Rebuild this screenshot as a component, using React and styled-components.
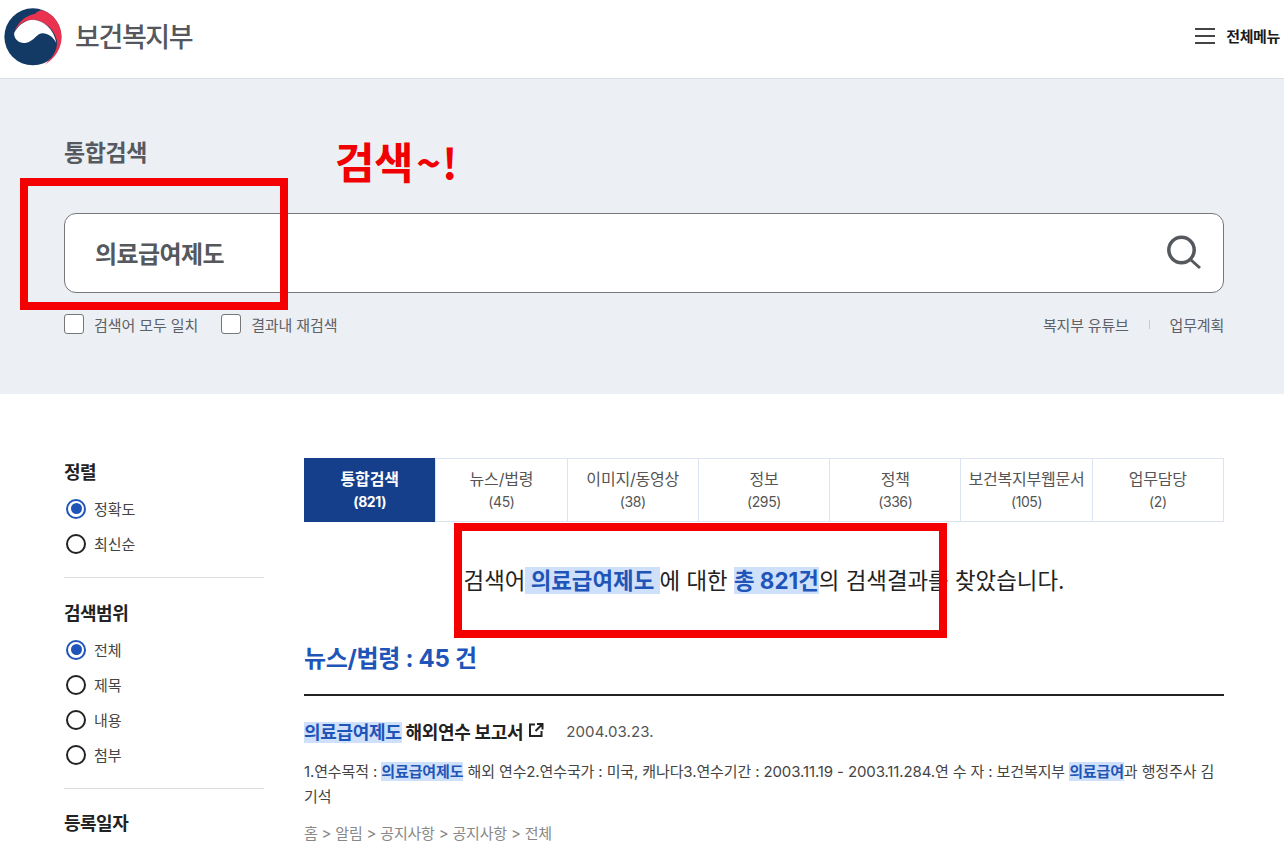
import React from "react";
import styled, { createGlobalStyle } from "styled-components";

const Global = createGlobalStyle`
  * { box-sizing: border-box; }
  html, body { margin: 0; padding: 0; height: 843px; overflow: hidden; background: #fff; }
  body { font-family: Inter, "Noto Sans CJK KR", sans-serif; color: #222; }
`;
const Page = styled.div`position: relative; width: 1284px; height: 843px; overflow: hidden;`;
const Header = styled.header`
  height: 79px; border-bottom: 1px solid #dcdee5; display: flex; align-items: center;
  justify-content: space-between; padding: 0 4px 0 0;
`;
const Brand = styled.div`display: flex; align-items: center; gap: 8px; margin-top: -7px;`;
const BrandName = styled.span`font-size: 27px; font-weight: 500; letter-spacing: -1.4px; color: #54575c;`;
const MenuButton = styled.div`
  display: flex; align-items: center; gap: 11px; font-size: 15px; font-weight: 700;
  letter-spacing: -0.35px; color: #1b1b1b; margin-top: -7px;
`;
const Burger = styled.span`
  width: 20px; height: 16px; display: block;
  border-top: 2px solid #444; border-bottom: 2px solid #444; position: relative;
  &::after { content: ""; position: absolute; left: 0; right: 0; top: 5px; height: 2px; background: #444; }
`;
const SearchBand = styled.section`height: 315px; background: #eceff4; padding: 58px 60px 0 64px;`;
const SearchTitle = styled.h2`margin: 0; font-size: 23px; line-height: 32px; font-weight: 700; letter-spacing: -0.4px; color: #565a60;`;
const SearchBox = styled.div`
  margin-top: 44px; height: 80px; background: #fff; border: 1px solid #75777b; border-radius: 12px;
  display: flex; align-items: center; justify-content: space-between; padding: 0 20px 2px 30px;
`;
const SearchValue = styled.span`font-size: 24px; font-weight: 700; letter-spacing: -0.6px; color: #55585c;`;
const Options = styled.div`margin-top: 21px; display: flex; justify-content: space-between; align-items: center; height: 20px;`;
const Checks = styled.div`display: flex; gap: 23px;`;
const CheckLabel = styled.label`display: flex; align-items: center; gap: 10px; font-size: 15px; letter-spacing: -0.1px; color: #5e6165;`;
const CheckBox = styled.span`width: 20px; height: 20px; border: 1px solid #75777b; border-radius: 3px; background: #fff;`;
const Links = styled.div`display: flex; align-items: center; font-size: 15px; letter-spacing: -0.2px; color: #5e6165;`;
const LinkSep = styled.i`width: 1px; height: 9px; background: #c9ccd2; margin: 0 20px;`;
const Body = styled.main`display: grid; grid-template-columns: 200px 920px; column-gap: 40px; padding: 64px 0 0 64px;`;
const Sidebar = styled.aside`display: flex; flex-direction: column;`;
const FilterGroup = styled.div`
  padding: ${p => (p.$last ? "0" : "1px 0 16px")}; margin-bottom: 21px;
  border-bottom: ${p => (p.$last ? "none" : "1px solid #dcdcdc")};
`;
const FilterTitle = styled.h3`margin: 0 0 4px; font-size: 18px; line-height: 28px; font-weight: 700; letter-spacing: -0.5px; color: #222;`;
const RadioRow = styled.div`height: 35px; display: flex; align-items: center; gap: 8px; font-size: 15px; letter-spacing: 0; color: #444;`;
const RadioDot = styled.span`
  width: 20px; height: 20px; margin-left: 2px; border-radius: 50%; background: #fff; position: relative;
  border: 2px solid ${p => (p.$on ? "#1f55b8" : "#222")};
  &::after {
    content: ""; display: ${p => (p.$on ? "block" : "none")}; position: absolute; inset: 2.5px;
    border-radius: 50%; background: #1f55b8;
  }
`;
const Content = styled.div`min-width: 0;`;
const Tabs = styled.nav`display: grid; grid-template-columns: repeat(7, 1fr); height: 64px; border-top: 1px solid #dbe5f1; border-bottom: 1px solid #dbe5f1; border-right: 1px solid #dbe5f1;`;
const Tab = styled.div`
  display: flex; flex-direction: column; align-items: center; justify-content: center; text-align: center;
  margin: ${p => (p.$active ? "-1px 0" : "0")};
  background: ${p => (p.$active ? "#153e8b" : "#fff")}; color: ${p => (p.$active ? "#fff" : "#555")};
  font-weight: ${p => (p.$active ? 700 : 400)}; border-left: ${p => (p.$active ? "0" : "1px solid #dbe5f1")};
  font-size: 16px; letter-spacing: -0.2px; line-height: 24px; white-space: nowrap;
`;
const TabCount = styled.span`font-size: 14px; line-height: 22px; letter-spacing: -0.4px;`;
const Summary = styled.p`margin: 43px 0 0; text-align: center; font-size: 22.4px; line-height: 32px; letter-spacing: 0; color: #222;`;
const Mark = styled.mark`background: #cfe0fb; color: #1f55b8; font-weight: 700; white-space: pre;`;
const SectionTitle = styled.h2`
  margin: 45px 0 0; padding-bottom: 18px; border-bottom: 2px solid #222; font-size: 24px; line-height: 34px;
  font-weight: 700; letter-spacing: -0.3px; color: #1f55b8;
`;
const ResultHead = styled.div`margin-top: 22px; display: flex; align-items: center; height: 26px;`;
const ResultTitle = styled.span`font-size: 18px; font-weight: 700; letter-spacing: -0.3px; color: #222;`;
const ResultDate = styled.span`margin-left: 22px; font-size: 15px; color: #555; letter-spacing: 0.1px;`;
const ExtLink = styled.svg`width: 16px; height: 16px; margin-left: 5px; margin-top: -3px; color: #222;`;
const ResultText = styled.p`margin: 15px 0 0; font-size: 15px; line-height: 25px; letter-spacing: -0.12px; color: #444; word-break: break-all;`;
const Crumbs = styled.div`margin-top: 14px; font-size: 15px; line-height: 22px; letter-spacing: -0.2px; color: #888;`;
const RedBox = styled.div`
  position: absolute; left: ${p => p.$x}px; top: ${p => p.$y}px; width: ${p => p.$w}px; height: ${p => p.$h}px;
  border: ${p => p.$b}px solid #f40000; pointer-events: none;
`;
const Scribble = styled.div`
  position: absolute; left: 335px; top: 131px; color: #f00000; font-size: 43px; line-height: 58px;
  font-weight: 700; letter-spacing: -0.5px; font-family: "Noto Sans CJK KR", sans-serif;
`;
const Tail = styled.span`font-size: 42px; margin-left: 3px; letter-spacing: 1px;`;
const LogoMark = styled.svg`display: block; margin-top: -2px;`;

const Logo = () => (
  <LogoMark width="67" height="67" viewBox="0 0 200 200">
    <circle cx="98" cy="107" r="85" fill="#123a64" />
    <path d="M42 92C55 60 80 42 105 38C112 30 122 26 128 28C160 38 184 70 184 108C183 145 160 175 133 190C155 170 172 150 170 120C165 85 130 58 100 56C75 56 55 70 42 92Z" fill="#e8324f" />
    <path d="M42 96C55 70 78 56 100 56C130 58 162 85 168 125C155 100 130 90 115 100C100 112 95 122 75 125C58 127 42 115 42 96Z" fill="#fff" />
  </LogoMark>
);

const SearchIcon = () => (
  <svg width="36" height="36" viewBox="0 0 36 36" fill="none" stroke="#55585c">
    <circle cx="14.5" cy="16" r="12.7" strokeWidth="3.5" />
    <path d="M24 26l9 8" strokeWidth="3" />
  </svg>
);

const tabs = [
  ["통합검색", "(821)"], ["뉴스/법령", "(45)"], ["이미지/동영상", "(38)"], ["정보", "(295)"],
  ["정책", "(336)"], ["보건복지부웹문서", "(105)"], ["업무담당", "(2)"],
];
const filters = [
  { title: "정렬", items: ["정확도", "최신순"] },
  { title: "검색범위", items: ["전체", "제목", "내용", "첨부"] },
];

export default function App() {
  return (
    <Page>
      <Global />
      <Header>
        <Brand><Logo /><BrandName>보건복지부</BrandName></Brand>
        <MenuButton><Burger />전체메뉴</MenuButton>
      </Header>
      <SearchBand>
        <SearchTitle>통합검색</SearchTitle>
        <SearchBox><SearchValue>의료급여제도</SearchValue><SearchIcon /></SearchBox>
        <Options>
          <Checks>
            <CheckLabel><CheckBox />검색어 모두 일치</CheckLabel>
            <CheckLabel><CheckBox />결과내 재검색</CheckLabel>
          </Checks>
          <Links>복지부 유튜브<LinkSep />업무계획</Links>
        </Options>
      </SearchBand>
      <Body>
        <Sidebar>
          {filters.map(f => (
            <FilterGroup key={f.title}>
              <FilterTitle>{f.title}</FilterTitle>
              {f.items.map((it, i) => (
                <RadioRow key={it}><RadioDot $on={i === 0} />{it}</RadioRow>
              ))}
            </FilterGroup>
          ))}
          <FilterGroup $last><FilterTitle>등록일자</FilterTitle></FilterGroup>
        </Sidebar>
        <Content>
          <Tabs>
            {tabs.map(([name, count], i) => (
              <Tab key={name} $active={i === 0}>{name}<TabCount>{count}</TabCount></Tab>
            ))}
          </Tabs>
          <Summary>검색어<Mark> 의료급여제도 </Mark>에 대한 <Mark>총 821건</Mark>의 검색결과를 찾았습니다.</Summary>
          <SectionTitle>뉴스/법령 : 45 건</SectionTitle>
          <ResultHead>
            <ResultTitle><Mark>의료급여제도</Mark> 해외연수 보고서</ResultTitle>
            <ExtLink viewBox="0 0 16 16" fill="none" stroke="currentColor" strokeWidth="2">
              <path d="M7 2.5H2v11.5h11.5V9M9 2h5.5v5.5M14 2.5L7.5 9" />
            </ExtLink>
            <ResultDate>2004.03.23.</ResultDate>
          </ResultHead>
          <ResultText>
            1.연수목적 : <Mark>의료급여제도</Mark> 해외 연수2.연수국가 : 미국, 캐나다3.연수기간 : 2003.11.19 - 2003.11.284.연 수 자 : 보건복지부 <Mark>의료급여</Mark>과 행정주사 김기석
          </ResultText>
          <Crumbs>홈 &gt; 알림 &gt; 공지사항 &gt; 공지사항 &gt; 전체</Crumbs>
        </Content>
      </Body>
      <RedBox $x={20} $y={178} $w={268} $h={132} $b={8} />
      <RedBox $x={454} $y={523} $w={493} $h={115} $b={8} />
      <Scribble>검색<Tail>~!</Tail></Scribble>
    </Page>
  );
}
